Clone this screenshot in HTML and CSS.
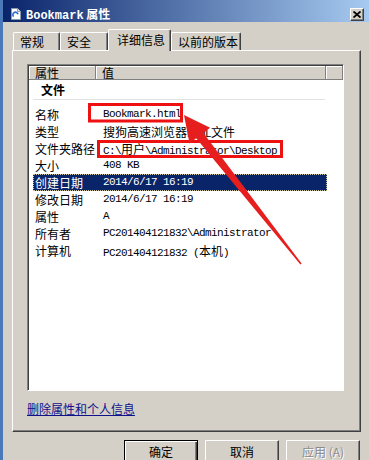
FILE: index.html
```html
<!DOCTYPE html>
<html lang="zh-CN">
<head>
  <meta charset="UTF-8">
  <title>Bookmark 属性</title>
  <link rel="stylesheet" href="styles.css">
</head>
<body>

  <div class="window">

    <!-- Title bar -->
    <div class="titlebar">
      <svg class="app-icon" viewBox="0 0 12 12" width="12" height="12">
        <path d="M1.5 0.5h6l3 3v8h-9z" fill="#ffffff" stroke="#8a9ab0" />
        <path d="M7.5 0.5v3h3" fill="#e4e8ee" stroke="#8a9ab0" />
        <path d="M3.6 8.6a2.6 2.6 0 1 1 4.4 -2.4" fill="none" stroke="#2a6ad0" stroke-width="1.6" />
      </svg>
      <span class="title"><span class="title-en">Bookmark</span> 属性</span>
      <span class="close-btn">
        <svg viewBox="0 0 8 7" width="8" height="7">
          <path d="M0.5 0.5l7 6M7.5 0.5l-7 6" stroke="#000000" stroke-width="1.8" />
        </svg>
      </span>
    </div>

    <!-- Tabs -->
    <div class="tabs">
      <div class="tab tab-general">常规</div>
      <div class="tab tab-security">安全</div>
      <div class="tab tab-active">详细信息</div>
      <div class="tab tab-previous">以前的版本</div>
    </div>

    <!-- Tab panel -->
    <div class="panel">
      <div class="listview">
        <div class="lv-header">
          <div class="col col-name">属性</div>
          <div class="col col-value">值</div>
          <div class="col col-rest"></div>
        </div>
        <div class="lv-group">文件</div>
        <div class="lv-rows">
          <div class="row"><span class="label">名称</span><span class="value">Bookmark.html</span></div>
          <div class="row"><span class="label">类型</span><span class="value"><span class="cjk">搜狗高速浏览器</span>HTML<span class="cjk">文件</span></span></div>
          <div class="row"><span class="label">文件夹路径</span><span class="value">C:\<span class="cjk">用户</span>\Administrator\Desktop</span></div>
          <div class="row"><span class="label">大小</span><span class="value">408 KB</span></div>
          <div class="row selected"><span class="label">创建日期</span><span class="value">2014/6/17 16:19</span></div>
          <div class="row"><span class="label">修改日期</span><span class="value">2014/6/17 16:19</span></div>
          <div class="row"><span class="label">属性</span><span class="value">A</span></div>
          <div class="row"><span class="label">所有者</span><span class="value">PC201404121832\Administrator</span></div>
          <div class="row"><span class="label">计算机</span><span class="value">PC201404121832 (<span class="cjk">本机</span>)</span></div>
        </div>
      </div>
      <a class="remove-link" href="#">删除属性和个人信息</a>
    </div>

    <!-- Dialog buttons -->
    <div class="buttons">
      <button class="btn btn-default">确定</button>
      <button class="btn">取消</button>
      <button class="btn" disabled>应用 (A)</button>
    </div>

  </div>

  <!-- Red annotation drawn over the screenshot -->
  <svg class="annotations" viewBox="0 0 369 460" width="369" height="460">
    <rect x="89.5" y="104.5" width="92" height="16.5" fill="none" stroke="#ee1111" stroke-width="3" />
    <rect x="98.5" y="141.5" width="183" height="15" fill="none" stroke="#ee1111" stroke-width="3" />
    <polygon points="184,115 210.1,127.7 203.4,132.9 301.6,263.6 300.4,264.4 196.2,138.3 189.5,143.5" fill="#e61e1e" />
  </svg>

</body>
</html>
```

FILE: styles.css
```css
* {
  box-sizing: border-box;
  margin: 0;
  padding: 0;
}

body {
  width: 369px;
  height: 460px;
  overflow: hidden;
  position: relative;
  background: #d4d0c8;
  font-family: "Noto Sans CJK SC", sans-serif;
  font-size: 12px;
  color: #000000;
}

.window {
  height: 460px;
  display: flex;
  flex-direction: column;
  border-left: 3px solid #4a78b8;
  background: #d4d0c8;
}

/* Title bar */
.titlebar {
  height: 22px;
  flex: none;
  display: flex;
  align-items: flex-start;
  padding: 8px 5px 0 7px;
  background: linear-gradient(to right, #0a246a, #a6caf0);
  color: #ffffff;
}

.app-icon {
  flex: none;
}

.title {
  margin-left: 4px;
  margin-top: -1px;
  font-weight: bold;
  font-size: 12px;
  line-height: 14px;
  white-space: nowrap;
}

.title-en {
  font-family: "Liberation Mono", monospace;
}

.close-btn {
  margin-left: auto;
  width: 14px;
  height: 13px;
  display: flex;
  align-items: center;
  justify-content: center;
  background: #d4d0c8;
  border: 1px solid;
  border-color: #ffffff #404040 #404040 #ffffff;
  box-shadow: inset -1px -1px #808080;
}

/* Tabs */
.tabs {
  display: flex;
  align-items: flex-end;
  height: 21px;
  margin: 7px 0 0 10px;
}

.tab {
  height: 18px;
  padding-left: 6px;
  line-height: 17px;
  white-space: nowrap;
  background: #d4d0c8;
  border: 1px solid #ffffff;
  border-bottom: none;
  border-right-color: #404040;
  border-radius: 2px 2px 0 0;
  box-shadow: inset -1px 0 #808080;
}

.tab-general { width: 47px; }
.tab-security { width: 48px; }
.tab-previous { width: 70px; }

.tab-active {
  width: 63px;
  height: 22px;
  margin-bottom: -1px;
  padding-left: 8px;
  line-height: 19px;
  position: relative;
  z-index: 1;
}

/* Tab panel */
.panel {
  margin-left: 9px;
  width: 349px;
  height: 382px;
  flex: none;
  border: 1px solid;
  border-color: #ffffff #404040 #404040 #ffffff;
  box-shadow: inset -1px -1px #808080;
  padding: 13px 0 0 14px;
}

.listview {
  width: 317px;
  height: 327px;
  background: #ffffff;
  border: 1px solid;
  border-color: #808080 #ffffff #ffffff #808080;
  box-shadow: inset 1px 1px #404040;
  padding: 1px 0 0 1px;
}

.lv-header {
  display: flex;
  height: 14px;
}

.lv-header .col {
  height: 14px;
  line-height: 13px;
  padding-left: 6px;
  background: #d4d0c8;
  border-right: 1px solid #808080;
  border-bottom: 1px solid #808080;
  box-shadow: inset 1px 1px #ffffff;
}

.col-name { width: 67px; }
.col-value { width: 230px; padding-left: 7px; }
.col-rest { flex: 1; border-right: none; }

.lv-group {
  height: 20px;
  line-height: 19px;
  margin-left: 4px;
  width: 292px;
  padding-left: 8px;
  font-weight: bold;
  border-bottom: 1px solid #e2e2e2;
}

.lv-rows {
  margin-top: 6px;
  padding-left: 4px;
}

.row {
  display: flex;
  width: 294px;
  height: 17px;
  line-height: 17px;
  white-space: nowrap;
}

.row .label {
  width: 70px;
  padding-left: 2px;
  flex: none;
}

.row .value {
  font-family: "Liberation Mono", monospace;
  font-size: 11px;
  letter-spacing: -0.6px;
}

.row .value .cjk {
  font-family: "Noto Sans CJK SC", sans-serif;
  font-size: 12px;
  letter-spacing: 0;
}

.row.selected {
  background: #0a246a;
  color: #ffffff;
  outline: 1px dotted #c8c4a0;
  outline-offset: -1px;
}

.remove-link {
  display: inline-block;
  margin-top: 10px;
  line-height: 16px;
  color: #10108c;
  text-decoration: underline;
}

/* Dialog buttons */
.buttons {
  display: flex;
  justify-content: flex-end;
  gap: 7px;
  margin-top: 8px;
  padding-right: 9px;
}

.btn {
  width: 74px;
  height: 23px;
  font-family: "Noto Sans CJK SC", sans-serif;
  font-size: 12px;
  line-height: 19px;
  color: #000000;
  background: #d4d0c8;
  border: 1px solid;
  border-color: #ffffff #404040 #404040 #ffffff;
  box-shadow: inset -1px -1px #808080;
}

.btn-default {
  border: 1px solid #000000;
  box-shadow: inset 1px 1px #ffffff, inset -1px -1px #404040, inset -2px -2px #808080;
}

.btn:disabled {
  color: #8a8a8a;
  text-shadow: 1px 1px #ffffff;
}

/* Annotation overlay */
.annotations {
  position: absolute;
  top: 0;
  left: 0;
  pointer-events: none;
}
```
